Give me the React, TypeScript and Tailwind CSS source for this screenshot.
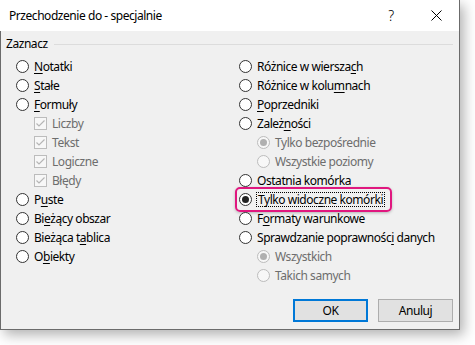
import React from "react";

const font = { fontFamily: '"Noto Sans", "Liberation Sans", sans-serif' };

function Radio({ checked = false, disabled = false }: { checked?: boolean; disabled?: boolean }) {
  return (
    <span
      className={
        "flex w-[13px] h-[13px] shrink-0 items-center justify-center rounded-full border " +
        (disabled ? "border-[#bcbcbc] bg-[#f7f7f7]" : "border-[#333333] bg-white")
      }
    >
      {checked && (
        <span className={"block w-[7px] h-[7px] rounded-full " + (disabled ? "bg-[#b0b0b0]" : "bg-[#222222]")} />
      )}
    </span>
  );
}

function Check() {
  return (
    <span className="flex w-[13px] h-[13px] shrink-0 items-center justify-center border border-[#bcbcbc] bg-[#f7f7f7]">
      <svg width="11" height="11" viewBox="0 0 11 11">
        <path d="M1.5 5.5 L4 8 L9.5 2.5" fill="none" stroke="#b5b5b5" strokeWidth="1.2" />
      </svg>
    </span>
  );
}

type Item = {
  label: React.ReactNode;
  kind: "radio" | "check";
  sub?: boolean;
  checked?: boolean;
  disabled?: boolean;
  focus?: boolean;
};

const U = ({ children }: { children: React.ReactNode }) => <span className="underline underline-offset-[2px]">{children}</span>;

const left: Item[] = [
  { label: <><U>N</U>otatki</>, kind: "radio" },
  { label: <><U>S</U>tałe</>, kind: "radio" },
  { label: <><U>F</U>ormuły</>, kind: "radio" },
  { label: "Liczby", kind: "check", sub: true, disabled: true },
  { label: "Tekst", kind: "check", sub: true, disabled: true },
  { label: "Logiczne", kind: "check", sub: true, disabled: true },
  { label: "Błędy", kind: "check", sub: true, disabled: true },
  { label: <>P<U>u</U>ste</>, kind: "radio" },
  { label: <>Bi<U>e</U>żący obszar</>, kind: "radio" },
  { label: <>Bieżąca t<U>a</U>blica</>, kind: "radio" },
  { label: <>O<U>b</U>iekty</>, kind: "radio" },
];

const right: Item[] = [
  { label: <>Różnice w wiersza<U>c</U>h</>, kind: "radio" },
  { label: <>Różnice w kolu<U>m</U>nach</>, kind: "radio" },
  { label: <><U>P</U>oprzedniki</>, kind: "radio" },
  { label: <>Zależ<U>n</U>ości</>, kind: "radio" },
  { label: "Tylko bezpośrednie", kind: "radio", sub: true, disabled: true, checked: true },
  { label: "Wszystkie poziomy", kind: "radio", sub: true, disabled: true },
  { label: <>Ostatnia komó<U>r</U>ka</>, kind: "radio" },
  { label: <>Tylko widoc<U>z</U>ne komórki</>, kind: "radio", checked: true, focus: true },
  { label: <>F<U>o</U>rmaty warunkowe</>, kind: "radio" },
  { label: <>Sprawdzanie poprawnośc<U>i</U> danych</>, kind: "radio" },
  { label: "Wszystkich", kind: "radio", sub: true, disabled: true, checked: true },
  { label: "Takich samych", kind: "radio", sub: true, disabled: true },
];

function Row({ item }: { item: Item }) {
  return (
    <div className={"relative flex h-[19px] items-center gap-[5px] whitespace-nowrap " + (item.sub ? "pl-[18px]" : "")}>
      {item.focus && (
        <div className="absolute left-[-4px] top-[-3px] h-[25px] w-[157px] rounded-[5px] border-2 border-[#e0177f] shadow-[0_1px_3px_rgba(0,0,0,0.25)]" />
      )}
      {item.kind === "radio" ? <Radio checked={item.checked} disabled={item.disabled} /> : <Check />}
      {item.focus ? (
        <span className="outline outline-1 outline-dotted outline-black leading-[13px] px-[1px] text-black">
          {item.label}
        </span>
      ) : (
        <span className={item.disabled ? "text-[#6d6d6d]" : "text-black"}>{item.label}</span>
      )}
    </div>
  );
}

export default function App() {
  return (
    <div className="w-[475px] h-[345px] bg-white tracking-[-0.45px]" style={font}>
      <div className="flex h-[330px] w-[460px] flex-col border-r border-b border-[#6b6b6b] bg-white text-[12px] shadow-[4px_5px_12px_rgba(0,0,0,0.3)]">
        <div className="flex h-[31px] shrink-0 items-center bg-white pl-[9px]">
          <span className="flex-1 text-[12px] text-black">Przechodzenie do - specjalnie</span>
          <span className="w-[12px] text-center text-[14px] font-light text-black">?</span>
          <span className="ml-[33px] mr-[17px] flex h-[12px] w-[12px] items-center justify-center">
            <svg width="11" height="11" viewBox="0 0 11 11">
              <path d="M0.5 0.5 L10.5 10.5 M10.5 0.5 L0.5 10.5" stroke="#000" strokeWidth="1" />
            </svg>
          </span>
        </div>
        <div className="flex flex-1 flex-col border-l border-[#6b6b6b] bg-[#f0f0f0]">
          <div className="mt-[5px] flex h-[16px] items-center pl-[5px] pr-[6px]">
            <span className="text-black">Zaznacz</span>
            <span className="ml-[6px] h-px flex-1 bg-[#dcdcdc]" />
          </div>
          <div className="mt-[5px] flex pl-[15px]">
            <div className="flex w-[223px] shrink-0 flex-col">
              {left.map((it, i) => (
                <Row key={i} item={it} />
              ))}
            </div>
            <div className="flex flex-1 flex-col">
              {right.map((it, i) => (
                <Row key={i} item={it} />
              ))}
            </div>
          </div>
          <div className="mt-auto flex justify-end gap-[10px] pb-[7px] pr-[6px]">
            <button className="flex h-[23px] w-[75px] items-center justify-center border-2 border-[#0078d7] bg-[#e1e1e1] text-black">
              OK
            </button>
            <button className="flex h-[23px] w-[75px] items-center justify-center border border-[#adadad] bg-[#e1e1e1] text-black">
              Anuluj
            </button>
          </div>
        </div>
      </div>
    </div>
  );
}
